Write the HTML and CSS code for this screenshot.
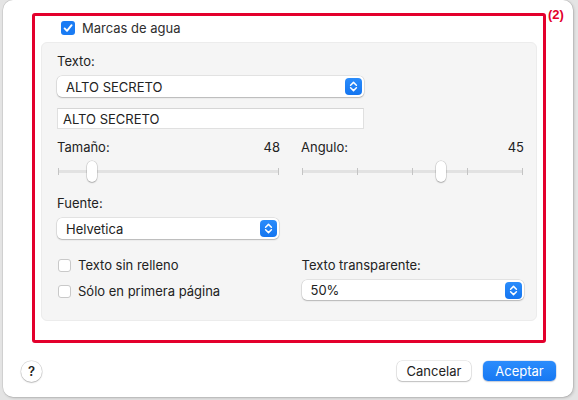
FILE: index.html
```html
<!DOCTYPE html>
<html lang="es">
<head>
<meta charset="utf-8">
<title>Marcas de agua</title>
<link rel="stylesheet" href="styles.css">
</head>
<body>
<div class="window">
  <span class="annot">(2)</span>
  <div class="redbox">
    <label class="check-row top-check">
      <span class="cb checked"><svg viewBox="0 0 14 14" width="14" height="14"><path d="M3.6 7.4 L6 9.8 L10.6 4.2" fill="none" stroke="#fff" stroke-width="1.9" stroke-linecap="round" stroke-linejoin="round"/></svg></span>
      <span>Marcas de agua</span>
    </label>
    <div class="panel">
      <div class="lbl">Texto:</div>
      <div class="popup wide">
        <span>ALTO SECRETO</span>
        <span class="stepper"><svg viewBox="0 0 17 17" width="17" height="17"><path d="M5.6 7.2 L8.5 4.4 L11.4 7.2 M5.6 9.8 L8.5 12.6 L11.4 9.8" fill="none" stroke="#fff" stroke-width="1.5" stroke-linecap="round" stroke-linejoin="round"/></svg></span>
      </div>
      <div class="field wide">ALTO SECRETO</div>

      <div class="cols sliders">
        <div class="col">
          <div class="lbl-row"><span>Tamaño:</span><span>48</span></div>
          <div class="slider">
            <div class="track"></div>
            <div class="ticks"><i></i><i></i></div>
            <div class="knob" style="left:29px"></div>
          </div>
        </div>
        <div class="col">
          <div class="lbl-row"><span>Angulo:</span><span>45</span></div>
          <div class="slider">
            <div class="track"></div>
            <div class="ticks"><i></i><i></i><i></i><i></i><i></i></div>
            <div class="knob" style="left:134px"></div>
          </div>
        </div>
      </div>

      <div class="lbl fuente">Fuente:</div>
      <div class="popup narrow">
        <span>Helvetica</span>
        <span class="stepper"><svg viewBox="0 0 17 17" width="17" height="17"><path d="M5.6 7.2 L8.5 4.4 L11.4 7.2 M5.6 9.8 L8.5 12.6 L11.4 9.8" fill="none" stroke="#fff" stroke-width="1.5" stroke-linecap="round" stroke-linejoin="round"/></svg></span>
      </div>

      <div class="cols bottom">
        <div class="col checks">
          <label class="check-row"><span class="cb"></span><span>Texto sin relleno</span></label>
          <label class="check-row"><span class="cb"></span><span>Sólo en primera página</span></label>
        </div>
        <div class="col">
          <div class="lbl">Texto transparente:</div>
          <div class="popup full">
            <span>50%</span>
            <span class="stepper"><svg viewBox="0 0 17 17" width="17" height="17"><path d="M5.6 7.2 L8.5 4.4 L11.4 7.2 M5.6 9.8 L8.5 12.6 L11.4 9.8" fill="none" stroke="#fff" stroke-width="1.5" stroke-linecap="round" stroke-linejoin="round"/></svg></span>
          </div>
        </div>
      </div>
    </div>
  </div>
  <div class="footer">
    <button class="help">?</button>
    <div class="spacer"></div>
    <button class="btn cancel">Cancelar</button>
    <button class="btn primary">Aceptar</button>
  </div>
</div>
</body>
</html>
```
FILE: styles.css
```css
html, body {
  margin: 0;
  padding: 0;
}
body {
  background: #e4e4e4;
  width: 578px;
  height: 400px;
  overflow: hidden;
  font-family: Inter, "Liberation Sans", sans-serif;
  font-size: 13px;
  line-height: 16px;
  color: #222;
}
.window {
  position: relative;
  margin-left: 3px;
  width: 570px;
  height: 397px;
  background: #fff;
  border-radius: 10px;
  box-shadow: 0 0 0 0.5px rgba(0,0,0,0.12), 1px 1px 3px rgba(0,0,0,0.18);
  padding: 13px 0 0 29px;
  box-sizing: border-box;
}
.annot {
  position: absolute;
  left: 545px;
  top: 7px;
  color: #e3002c;
  font-family: "Liberation Sans", Arial, sans-serif;
  font-weight: bold;
  font-size: 13px;
  line-height: 16px;
}
.redbox {
  width: 514px;
  height: 330px;
  box-sizing: border-box;
  border: 3px solid #e3002c;
  border-radius: 3px;
  padding: 5px 6px 0 6px;
}
.check-row {
  display: flex;
  align-items: center;
  gap: 7px;
  height: 16px;
}
.top-check {
  margin-left: 20px;
  height: 14px;
  color: #2e2e2e;
}
.cb {
  width: 13px;
  height: 13px;
  box-sizing: border-box;
  border: 1px solid #c9c9c9;
  border-radius: 3px;
  background: #fff;
  flex: none;
  display: block;
}
.cb.checked {
  width: 14px;
  height: 14px;
  border: none;
  background: #1a7cf4;
}
.cb svg { display: block; }
.panel {
  margin-top: 7px;
  width: 496px;
  height: 279px;
  box-sizing: border-box;
  background: #f5f5f5;
  border: 1px solid #ececec;
  border-radius: 6px;
  padding: 10px 12px 0 15px;
  display: flex;
  flex-direction: column;
}
.lbl { height: 16px; }
.popup {
  margin-top: 7px;
  height: 21px;
  box-sizing: border-box;
  background: #fff;
  border-radius: 5px;
  box-shadow: 0 0 0 0.5px rgba(0,0,0,0.14), 0 1px 1.5px rgba(0,0,0,0.2);
  display: flex;
  align-items: center;
  justify-content: space-between;
  padding: 0 2px 0 9px;
  color: #222;
}
.stepper {
  width: 17px;
  height: 17px;
  border-radius: 4px;
  background: linear-gradient(#2a8cfb, #1475f0);
  display: block;
}
.stepper svg { display: block; }
.wide { width: 307px; }
.narrow { width: 222px; }
.full { width: 222px; height: 20px; }
.field {
  margin-top: 11px;
  height: 21px;
  box-sizing: border-box;
  background: #fff;
  border: 1px solid #e0e0e0;
  border-top-color: #d6d6d6;
  padding: 2px 0 0 5px;
  color: #222;
}
.cols {
  display: flex;
  gap: 21px;
}
.col {
  width: 223px;
  display: flex;
  flex-direction: column;
}
.sliders { margin-top: 10px; }
.lbl-row {
  display: flex;
  justify-content: space-between;
  height: 16px;
}
.slider {
  position: relative;
  margin-top: 6px;
  height: 21px;
  margin-left: 1px;
  width: 221px;
}
.track {
  position: absolute;
  left: 0;
  right: 0;
  top: 9px;
  height: 3px;
  background: #e2e2e2;
  border-radius: 2px;
}
.ticks {
  position: absolute;
  left: 0;
  right: 0;
  top: 7px;
  display: flex;
  justify-content: space-between;
}
.ticks i {
  width: 1px;
  height: 7px;
  background: #c4c4c4;
  display: block;
}
.knob {
  position: absolute;
  top: 0;
  width: 10px;
  height: 21px;
  box-sizing: border-box;
  background: #fff;
  border-radius: 5px;
  box-shadow: 0 0 0 0.5px rgba(0,0,0,0.18), 0 1px 1.5px rgba(0,0,0,0.22);
}
.fuente { margin-top: 13px; }
.bottom { margin-top: 18px; }
.checks {
  gap: 10px;
  padding-left: 1px;
}
.checks .check-row { gap: 7px; }
.footer {
  display: flex;
  align-items: center;
  margin: 18px 17px 0 -11px;
  height: 20px;
  gap: 12px;
}
.spacer { flex: 1; }
button {
  font-family: Inter, "Liberation Sans", sans-serif;
  font-size: 13px;
  line-height: 16px;
  margin: 0;
}
.help {
  width: 21px;
  height: 21px;
  border-radius: 50%;
  border: none;
  background: #fff;
  box-shadow: 0 0 0 0.5px rgba(0,0,0,0.16), 0 1px 1.5px rgba(0,0,0,0.2);
  padding: 0;
  font-weight: 600;
  color: #222;
}
.btn {
  height: 20px;
  padding: 0;
  border: none;
  border-radius: 5px;
  background: #fff;
  color: #222;
  width: 73px;
  box-shadow: 0 0 0 0.5px rgba(0,0,0,0.15), 0 1px 1.5px rgba(0,0,0,0.2);
}
.btn.cancel { width: 74px; }
.btn.primary {
  background: linear-gradient(#2b8cfc, #1778f2);
  color: #fff;
  box-shadow: 0 0 0 0.5px rgba(0,60,160,0.2), 0 1px 1.5px rgba(0,0,0,0.15);
}
```
